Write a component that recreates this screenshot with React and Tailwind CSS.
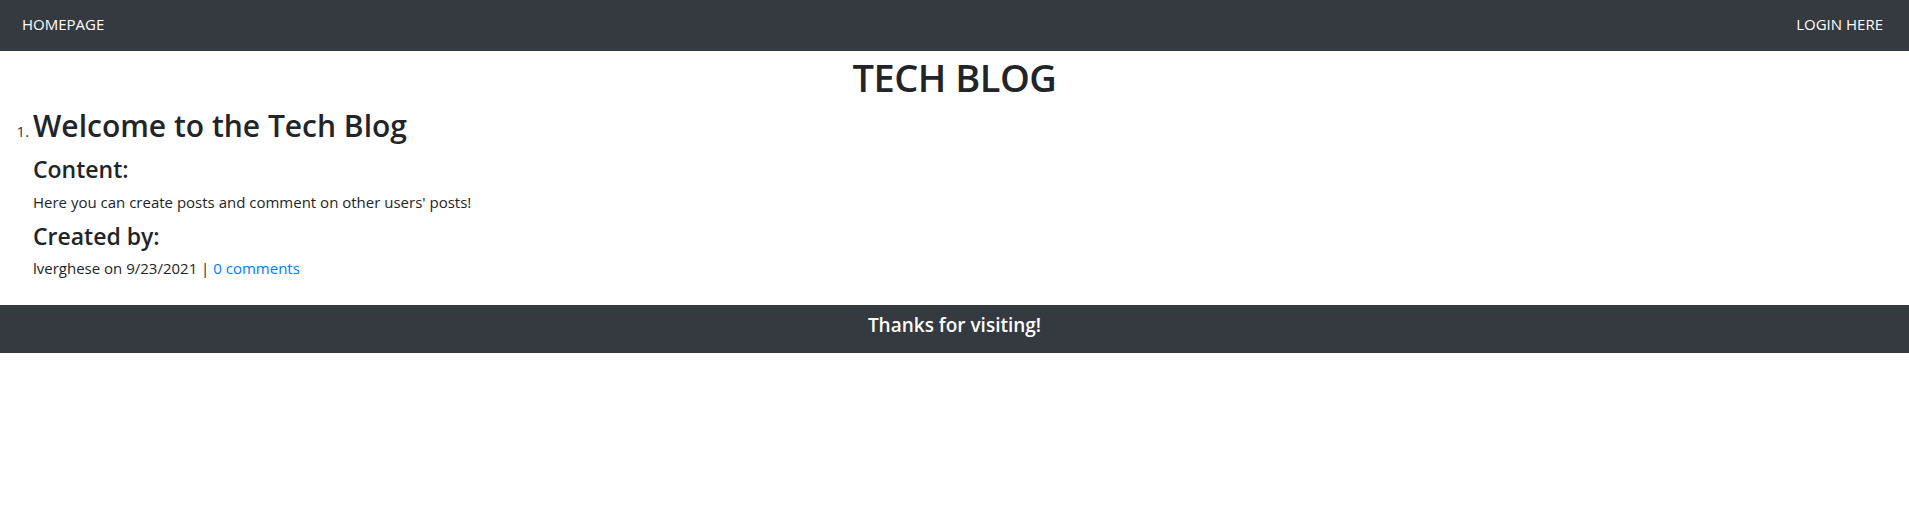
import React from "react";

export default function App() {
  return (
    <div className="w-full bg-white text-[#212529]" style={{ fontFamily: '"Open Sans", "Noto Sans", sans-serif' }}>
      <nav className="h-[51px] bg-[#343a40] flex items-center justify-between pl-[22px] pr-[26px] pb-[2px] text-white text-[15px]">
        <a className="text-white">HOMEPAGE</a>
        <a className="text-white">LOGIN HERE</a>
      </nav>
      <main>
        <h1 className="text-center text-[38px] leading-[46px] font-semibold tracking-[-0.5px] mt-[3px]">TECH BLOG</h1>
        <ol className="list-decimal pl-[33px] marker:text-[#4a2a45] marker:text-[15px]">
          <li>
            <h2 className="text-[30px] leading-[36px] font-semibold mt-[8px]">Welcome to the Tech Blog</h2>
            <h4 className="text-[23px] leading-[28px] font-semibold mt-[11px]">Content:</h4>
            <p className="text-[15px] leading-[24px] mt-[7px]">Here you can create posts and comment on other users' posts!</p>
            <h4 className="text-[23px] leading-[28px] font-semibold mt-[8px]">Created by:</h4>
            <p className="text-[15px] leading-[24px] mt-[6px]">
              lverghese on 9/23/2021 | <a className="text-[#007bff]">0 comments</a>
            </p>
          </li>
        </ol>
        <footer className="mt-[25px] h-[48px] bg-[#343a40] flex justify-center pt-[5px] text-white text-[19px] leading-[30px] font-semibold">
          Thanks for visiting!
        </footer>
      </main>
    </div>
  );
}
